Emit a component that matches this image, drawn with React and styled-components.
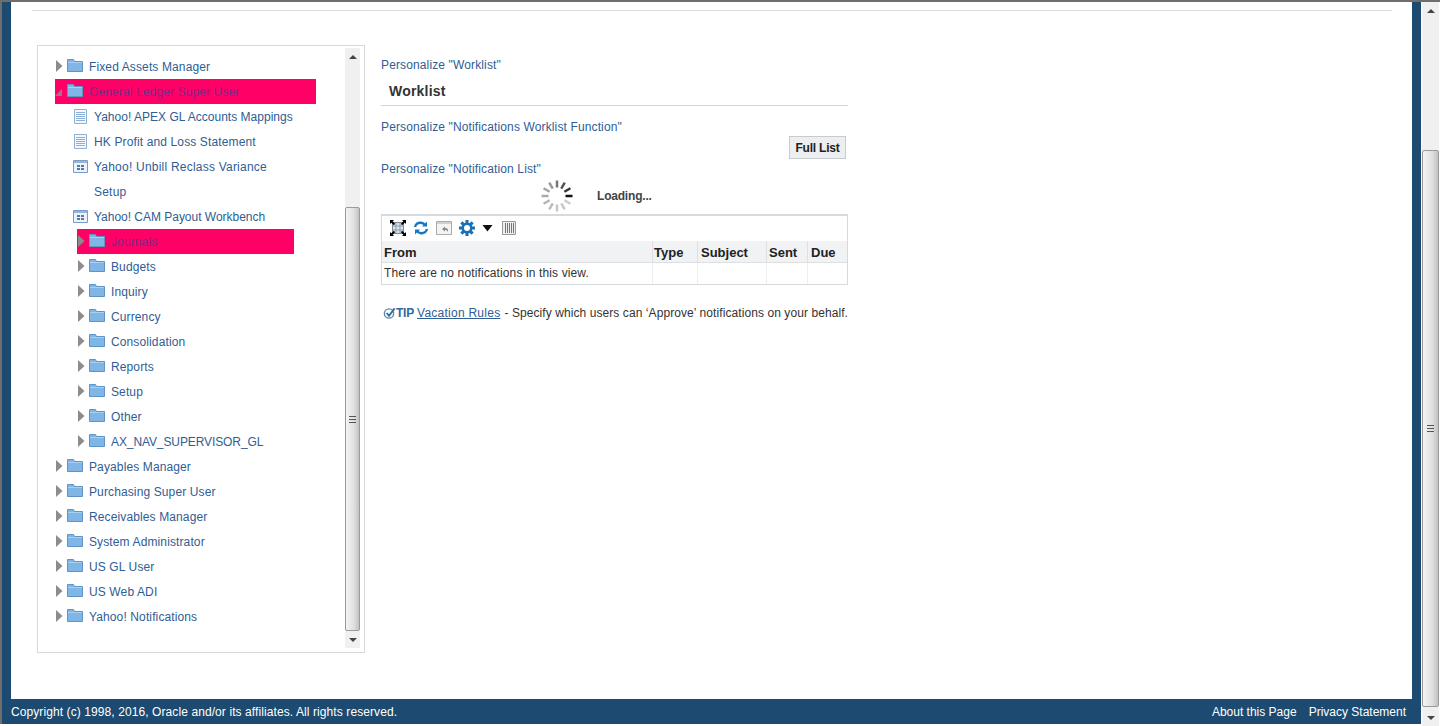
import React from "react"
import styled, { createGlobalStyle } from "styled-components"

const GlobalStyle = createGlobalStyle`
  html, body {
    margin: 0;
    padding: 0;
    height: 726px;
    overflow: hidden;
    background: #fff;
    font-family: "Liberation Sans", Arial, sans-serif;
    font-size: 12px;
  }
`

const Page = styled.div`
  display: flex;
  width: 1440px;
  height: 726px;
  box-sizing: border-box;
  border-top: 2px solid #6e6e6e;
`

const Frame = styled.div`
  display: flex;
  flex-direction: column;
  width: 1421px;
  height: 722px;
  box-sizing: border-box;
  border-left: 2px solid #6e6e6e;
  background: #1c4a70;
`

const Content = styled.main`
  flex: 1;
  margin: 0 9px;
  background: #fff;
  padding-top: 8px;
  min-height: 0;
`

const TopRule = styled.div`
  height: 1px;
  margin: 0 20px 34px 21px;
  background: #dcdcdc;
`

const Columns = styled.div`
  display: flex;
  align-items: flex-start;
  margin-left: 26px;
  gap: 16px;
`

const TreePanel = styled.nav`
  display: flex;
  justify-content: space-between;
  width: 328px;
  height: 608px;
  box-sizing: border-box;
  border: 1px solid #d8d8d8;
  padding: 2px 4px 4px 0;
`

const TreeList = styled.ul`
  list-style: none;
  margin: 0;
  padding: 6px 0 0;
  width: 307px;
`

const Row = styled.li`
  display: flex;
  align-items: flex-start;
  width: ${(p) => p.$width}px;
  margin-left: ${(p) => p.$indent}px;
  line-height: 25px;
  background: ${(p) => (p.$selected ? "#ff0066" : "transparent")};
  color: ${(p) => (p.$selected ? "#7c2a86" : "#2f5d94")};
`

const Arrow = styled.svg`
  flex: none;
  width: 8px;
  height: 12px;
  margin-top: 6px;
`

const FolderIcon = styled.svg`
  flex: none;
  width: 16px;
  height: 13px;
  margin: 5px 6px 0 4px;
`

const PageIcon = styled.svg`
  flex: none;
  width: 16px;
  height: 16px;
  margin: 5px 5px 0 0;
`

const Label = styled.span`
  white-space: nowrap;
  letter-spacing: ${(p) => p.$track ?? 0.12}px;
  margin: 1px 0 -1px;
`

const Scroll = styled.div`
  flex: none;
  display: flex;
  flex-direction: column;
  width: ${(p) => p.$width}px;
  background: #f0f0f0;
  height: ${(p) => (p.$tall ? "100%" : "auto")};
`

const PageScroll = styled(Scroll)`
  margin-left: 1px;
`

const ScrollButton = styled.div`
  flex: none;
  display: flex;
  align-items: center;
  justify-content: center;
  height: 17px;
`

const Caret = styled.span`
  width: 0;
  height: 0;
  border-left: 4px solid transparent;
  border-right: 4px solid transparent;
  ${(p) => (p.$down ? "border-top: 4px solid #444;" : "border-bottom: 4px solid #444;")}
`

const ScrollSpace = styled.div`
  flex: none;
  height: ${(p) => p.$height}px;
`

const Thumb = styled.div`
  flex: 1;
  display: flex;
  align-items: center;
  justify-content: center;
  min-height: 0;
  box-sizing: border-box;
  border: 1px solid #9a9a9a;
  border-radius: 2px;
  background: linear-gradient(90deg, #f4f4f4, #e0e0e0 60%, #c2c2c2);
`

const Grip = styled.div`
  width: 7px;
  height: 7px;
  background: repeating-linear-gradient(#555 0 1px, transparent 1px 3px);
`

const Work = styled.section`
  width: 467px;
  padding-top: 13px;
`

const Link = styled.div`
  color: #2f5d94;
  line-height: 14px;
  letter-spacing: 0.13px;
`

const Heading = styled.h1`
  margin: 11px 0 0;
  padding: 0 0 5px 8px;
  font-size: 14px;
  line-height: 17px;
  font-weight: bold;
  letter-spacing: 0.2px;
  color: #333;
  border-bottom: 1px solid #d4d4d4;
`

const PersonalizeGap = styled(Link)`
  margin-top: ${(p) => p.$top}px;
`

const ButtonRow = styled.div`
  display: flex;
  justify-content: flex-end;
  padding: 2px 2px 3px 0;
`

const Button = styled.button`
  width: 57px;
  height: 23px;
  padding: 0;
  font: bold 12px "Liberation Sans", Arial, sans-serif;
  letter-spacing: -0.2px;
  color: #222;
  background: #eceeef;
  border: 1px solid #c6cbcf;
`

const LoadingRow = styled.div`
  display: flex;
  align-items: center;
  height: 34px;
  padding-left: 159px;
  margin-top: 3px;
  gap: 23px;
  font-weight: bold;
  letter-spacing: -0.2px;
  color: #444;
`

const Table = styled.div`
  border: 1px solid #d4dadd;
  border-top-width: 2px;
  margin-top: 1px;
  background: #fff;
`

const Toolbar = styled.div`
  display: flex;
  align-items: center;
  gap: 7px;
  height: 25px;
  box-sizing: border-box;
  padding: 0 0 2px 8px;
`

const Grid = styled.div`
  display: grid;
  grid-template-columns: 270px 45px 69px 41px 40px;
`

const HeadCell = styled.div`
  height: 22px;
  line-height: 23px;
  padding-left: ${(p) => p.$pad}px;
  font-size: 13px;
  font-weight: bold;
  color: #222;
  background: #f0f2f3;
  border-bottom: 1px solid #dde0e2;
  border-left: ${(p) => (p.$first ? "0" : "1px solid #dde0e2")};
  box-sizing: border-box;
`

const BodyCell = styled.div`
  height: 21px;
  line-height: 20px;
  padding-left: 2px;
  color: #333;
  white-space: nowrap;
  letter-spacing: 0.12px;
  border-left: ${(p) => (p.$first ? "0" : "1px solid #eceeef")};
  box-sizing: border-box;
`

const Tip = styled.div`
  display: flex;
  align-items: center;
  margin-top: 20px;
  padding-left: 2px;
  line-height: 16px;
  color: #333;
  white-space: nowrap;
  letter-spacing: 0.08px;
`

const TipTag = styled.span`
  margin: 0 3px 0 0;
  font-weight: bold;
  letter-spacing: -0.2px;
  color: #2f6aa0;
`

const TipLink = styled.a`
  margin-right: 4px;
  color: #2f5d94;
  letter-spacing: 0.25px;
  text-decoration: underline;
`

const Footer = styled.footer`
  flex: none;
  display: flex;
  justify-content: space-between;
  height: 25px;
  padding: 0 15px 0 9px;
  line-height: 26px;
  color: #fff;
`

const Copyright = styled.span`
  letter-spacing: 0.09px;
`

const FooterLinks = styled.div`
  display: flex;
  gap: 12px;
`

const Folder = () => (
  <FolderIcon viewBox="0 0 16 13">
    <path d="M.5 12.500V.5h6l1 2h8v10z" fill="#7fb6e6" stroke="#5f94c4" />
    <path d="M1 3.500h14" stroke="#a9d0f0" />
  </FolderIcon>
)

const Closed = () => (
  <Arrow viewBox="0 0 8 12">
    <path d="M1 0l6.500 6L1 12z" fill="#8c8c8c" />
  </Arrow>
)

const Open = () => (
  <Arrow viewBox="0 0 8 12">
    <path d="M7 4v7H0z" fill="#a8708a" />
  </Arrow>
)

const Report = () => (
  <PageIcon viewBox="0 0 16 16">
    <path d="M1.500.5h12v14h-12z" fill="#f4f8fc" stroke="#8fb0d6" />
    <path d="M3 3.500h9M3 5.500h9M3 7.500h9M3 9.500h9M3 11.500h9" stroke="#8fb0d6" />
  </PageIcon>
)

const Form = () => (
  <PageIcon viewBox="0 0 16 16">
    <path d="M.5 1.500h14v12H.5z" fill="#eef3f9" stroke="#7a9cc4" />
    <path d="M1 2h13v2H1z" fill="#9ab4d4" />
    <path d="M4 6h3v2H4zM8 6h3v2H8zM4 9h3v2H4zM8 9h3v2H8z" fill="#4f7db2" />
  </PageIcon>
)

const spinnerShades = ["#111", "#ccc", "#c8c8c8", "#c4c4c4", "#bbb", "#b4b4b4", "#aaa", "#a4a4a4", "#999", "#777", "#555", "#333"]

const Spinner = () => (
  <svg width="34" height="34" viewBox="-17 -17 34 34">
    {spinnerShades.map((shade, i) => (
      <line
        key={i}
        x1="8.500"
        y1="0"
        x2="15.500"
        y2="0"
        stroke={shade}
        strokeWidth="2.500"
        transform={`rotate(${i * 30})`}
      />
    ))}
  </svg>
)

const DetachIcon = () => (
  <svg width="16" height="16" viewBox="0 0 16 16">
    <path d="M2.500 2.500h11v11h-11z" fill="#dce6ee" stroke="#7a8a98" />
    <path d="M6 3v10M10 3v10M3 6h10M3 10h10" stroke="#8a9aa8" />
    <path d="M1 1l3.500 3.500M15 1l-3.500 3.500M1 15l3.500-3.500M15 15l-3.500-3.500" stroke="#000" strokeWidth="1.800" />
    <path d="M0 0h4L0 4zM16 0h-4l4 4zM0 16h4l-4-4zM16 16h-4l4-4z" fill="#000" />
  </svg>
)

const RefreshIcon = () => (
  <svg width="16" height="16" viewBox="0 0 16 16" fill="none" stroke="#1a78c2" strokeWidth="2.400">
    <path d="M2 7c.8-3 3.200-4.400 6-4.200 1.800.2 3 1 4 2.200" />
    <path d="M14 9c-.8 3-3.200 4.400-6 4.200-1.800-.2-3-1-4-2.200" />
    <path d="M14 1.500v5h-5zM2 14.500v-5h5z" fill="#1a78c2" stroke="none" />
  </svg>
)

const RestoreIcon = () => (
  <svg width="16" height="16" viewBox="0 0 16 16" fill="none">
    <path d="M.5 1.500h15v13H.5z" fill="#f4f4f4" stroke="#aaa" />
    <path d="M1 2h14v2H1z" fill="#d0d0d0" />
    <path d="M6 9l3-2.500v1.500c2.500 0 3.500 1.500 3 4-.8-1.600-1.600-2-3-2v1.500z" fill="#8a8a8a" />
  </svg>
)

const GearIcon = () => (
  <svg width="16" height="16" viewBox="0 0 16 16">
    <g fill="#1a6fb5">
      {[0, 45, 90, 135, 180, 225, 270, 315].map((a) => (
        <rect key={a} x="6.500" y="0" width="3" height="4" transform={`rotate(${a} 8 8)`} />
      ))}
      <circle cx="8" cy="8" r="5.500" />
    </g>
    <circle cx="8" cy="8" r="3" fill="#fff" />
  </svg>
)

const DownIcon = () => (
  <svg width="12" height="8" viewBox="0 0 12 8">
    <path d="M.5 1h10L5.500 7.500z" fill="#111" />
  </svg>
)

const ColumnsIcon = () => (
  <svg width="16" height="14" viewBox="0 0 16 14" fill="none">
    <path d="M1.500.5h13v13h-13z" fill="#eee" stroke="#999" />
    <path d="M4.500 2v10M6.500 2v10M8.500 2v10M10.500 2v10M12.500 2v10" stroke="#777" />
  </svg>
)

const CheckIcon = () => (
  <svg width="14" height="14" viewBox="0 0 14 14" fill="none">
    <circle cx="6.500" cy="7.500" r="5" stroke="#5f87ad" strokeWidth="1.500" />
    <path d="M4 7l2.500 3L12.500 2" stroke="#2f6aa0" strokeWidth="2" />
  </svg>
)

const tree = [
  { label: "Fixed Assets Manager", level: 0 },
  { label: "General Ledger Super User", level: 0, open: true, selected: true },
  { label: "Yahoo! APEX GL Accounts Mappings", icon: "report", track: 0.02 },
  { label: "HK Profit and Loss Statement", icon: "report", track: 0.13 },
  { label: ["Yahoo! Unbill Reclass Variance", "Setup"], icon: "form", track: 0.22 },
  { label: "Yahoo! CAM Payout Workbench", icon: "form", track: -0.02 },
  { label: "Journals", level: 1, selected: true },
  { label: "Budgets", level: 1 },
  { label: "Inquiry", level: 1 },
  { label: "Currency", level: 1 },
  { label: "Consolidation", level: 1 },
  { label: "Reports", level: 1 },
  { label: "Setup", level: 1 },
  { label: "Other", level: 1 },
  { label: "AX_NAV_SUPERVISOR_GL", level: 1, track: -0.1 },
  { label: "Payables Manager", level: 0 },
  { label: "Purchasing Super User", level: 0 },
  { label: "Receivables Manager", level: 0 },
  { label: "System Administrator", level: 0 },
  { label: "US GL User", level: 0 },
  { label: "US Web ADI", level: 0 },
  { label: "Yahoo! Notifications", level: 0 },
]

const TreeRow = ({ item }) => {
  if (item.icon) {
    const lines = [].concat(item.label)
    return (
      <Row $indent={35} $width={260}>
        {item.icon === "report" ? <Report /> : <Form />}
        <Label $track={item.track}>
          {lines.map((line) => (
            <div key={line}>{line}</div>
          ))}
        </Label>
      </Row>
    )
  }
  return (
    <Row
      $indent={item.level ? 39 : 17}
      $width={item.level ? 217 : 261}
      $selected={item.selected}
    >
      {item.open ? <Open /> : <Closed />}
      <Folder />
      <Label $track={item.track}>{item.label}</Label>
    </Row>
  )
}

const headers = [
  { text: "From", pad: 2 },
  { text: "Type", pad: 1 },
  { text: "Subject", pad: 3 },
  { text: "Sent", pad: 2 },
  { text: "Due", pad: 3 },
]

export default function App() {
  return (
    <>
      <GlobalStyle />
      <Page>
        <Frame>
          <Content>
            <TopRule />
            <Columns>
              <TreePanel>
                <TreeList>
                  {tree.map((item) => (
                    <TreeRow key={[].concat(item.label)[0] + (item.level ?? "")} item={item} />
                  ))}
                </TreeList>
                <Scroll $width={15} $tall>
                  <ScrollButton>
                    <Caret />
                  </ScrollButton>
                  <ScrollSpace $height={142} />
                  <Thumb>
                    <Grip />
                  </Thumb>
                  <ScrollButton>
                    <Caret $down />
                  </ScrollButton>
                </Scroll>
              </TreePanel>
              <Work>
                <Link>Personalize "Worklist"</Link>
                <Heading>Worklist</Heading>
                <PersonalizeGap $top={14}>Personalize "Notifications Worklist Function"</PersonalizeGap>
                <ButtonRow>
                  <Button>Full List</Button>
                </ButtonRow>
                <Link>Personalize "Notification List"</Link>
                <LoadingRow>
                  <Spinner />
                  <span>Loading...</span>
                </LoadingRow>
                <Table>
                  <Toolbar>
                    <DetachIcon />
                    <RefreshIcon />
                    <RestoreIcon />
                    <GearIcon />
                    <DownIcon />
                    <ColumnsIcon />
                  </Toolbar>
                  <Grid>
                    {headers.map((h, i) => (
                      <HeadCell key={h.text} $first={i === 0} $pad={h.pad}>
                        {h.text}
                      </HeadCell>
                    ))}
                    <BodyCell $first>There are no notifications in this view.</BodyCell>
                    <BodyCell />
                    <BodyCell />
                    <BodyCell />
                    <BodyCell />
                  </Grid>
                </Table>
                <Tip>
                  <CheckIcon />
                  <TipTag>TIP</TipTag>
                  <TipLink>Vacation Rules</TipLink>
                  <span>- Specify which users can ‘Approve’ notifications on your behalf.</span>
                </Tip>
              </Work>
            </Columns>
          </Content>
          <Footer>
            <Copyright>Copyright (c) 1998, 2016, Oracle and/or its affiliates. All rights reserved.</Copyright>
            <FooterLinks>
              <span>About this Page</span>
              <span>Privacy Statement</span>
            </FooterLinks>
          </Footer>
        </Frame>
        <PageScroll $width={17}>
          <ScrollButton>
            <Caret />
          </ScrollButton>
          <ScrollSpace $height={131} />
          <Thumb>
            <Grip />
          </Thumb>
          <ScrollSpace $height={2} />
          <ScrollButton>
            <Caret $down />
          </ScrollButton>
        </PageScroll>
      </Page>
    </>
  )
}
